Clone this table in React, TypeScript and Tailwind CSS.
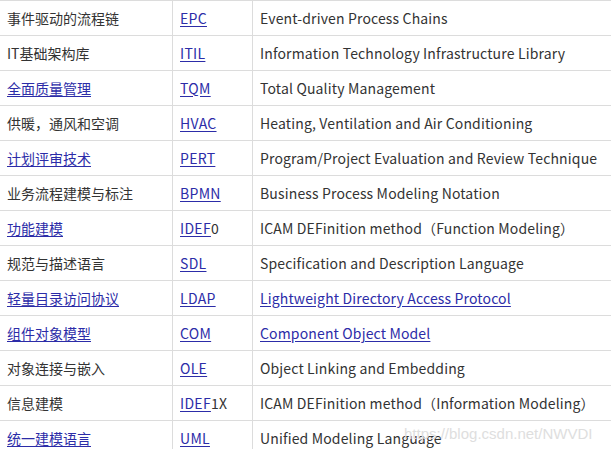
const rows: [string, boolean, string, string, string, boolean][] = [
  ["事件驱动的流程链", false, "EPC", "", "Event-driven Process Chains", false],
  ["IT基础架构库", false, "ITIL", "", "Information Technology Infrastructure Library", false],
  ["全面质量管理", true, "TQM", "", "Total Quality Management", false],
  ["供暖，通风和空调", false, "HVAC", "", "Heating, Ventilation and Air Conditioning", false],
  ["计划评审技术", true, "PERT", "", "Program/Project Evaluation and Review Technique", false],
  ["业务流程建模与标注", false, "BPMN", "", "Business Process Modeling Notation", false],
  ["功能建模", true, "IDEF", "0", "ICAM DEFinition method（Function Modeling）", false],
  ["规范与描述语言", false, "SDL", "", "Specification and Description Language", false],
  ["轻量目录访问协议", true, "LDAP", "", "Lightweight Directory Access Protocol", true],
  ["组件对象模型", true, "COM", "", "Component Object Model", true],
  ["对象连接与嵌入", false, "OLE", "", "Object Linking and Embedding", false],
  ["信息建模", false, "IDEF", "1X", "ICAM DEFinition method（Information Modeling）", false],
  ["统一建模语言", true, "UML", "", "Unified Modeling Language", false],
];

const link = "text-[#2c2ca8] underline underline-offset-2";

export default function App() {
  return (
    <div className="relative w-[611px] h-[449px] overflow-hidden bg-white font-['Noto_Sans_CJK_SC',sans-serif] text-[14px] text-[#333]">
      <div>
        {rows.map(([zh, zhLink, abbr, suffix, en, enLink], i) => (
          <div key={i} className="grid grid-cols-[173px_80px_1fr] h-[35px] border-t border-[#dcdcdc]">
            <div className="flex items-center pl-[7px] border-r border-[#dcdcdc] whitespace-nowrap">
              <span className={zhLink ? link : ""}>{zh}</span>
            </div>
            <div className="flex items-center pl-[7px] border-r border-[#dcdcdc] whitespace-nowrap tracking-[0.3px]">
              <span className={link}>{abbr}</span>
              {suffix && <span>{suffix}</span>}
            </div>
            <div className="flex items-center pl-[7px] whitespace-nowrap tracking-[0.15px]">
              <span className={enLink ? link : ""}>{en}</span>
            </div>
          </div>
        ))}
      </div>
      <div className="absolute left-[404px] top-[423px] text-[15px] text-[#dedede] font-['Liberation_Sans',sans-serif]">
        https://blog.csdn.net/NWVDI
      </div>
    </div>
  );
}
